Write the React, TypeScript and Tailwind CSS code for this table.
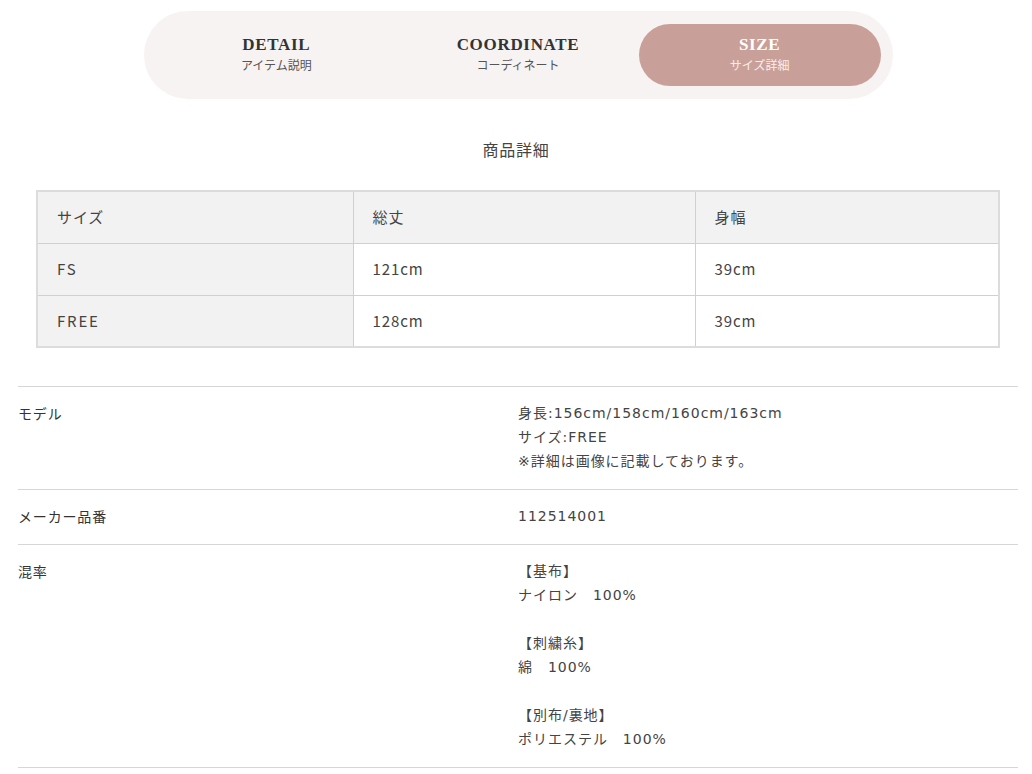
import React from 'react';

const TABS = [
  { id: 'detail', en: 'DETAIL', ja: 'アイテム説明' },
  { id: 'coordinate', en: 'COORDINATE', ja: 'コーディネート' },
  { id: 'size', en: 'SIZE', ja: 'サイズ詳細' },
];

const SIZE_ROWS = [
  ['FS', '121cm', '39cm'],
  ['FREE', '128cm', '39cm'],
];

const SPECS: { label: string; lines: string[] }[] = [
  {
    label: 'モデル',
    lines: ['身長:156cm/158cm/160cm/163cm', 'サイズ:FREE', '※詳細は画像に記載しております。'],
  },
  { label: 'メーカー品番', lines: ['112514001'] },
  {
    label: '混率',
    lines: ['【基布】', 'ナイロン　100%', '', '【刺繍糸】', '綿　100%', '', '【別布/裏地】', 'ポリエステル　100%'],
  },
];

const jp = "font-['Noto_Sans_CJK_JP',sans-serif]";

export default function App() {
  const active = 'size';
  return (
    <div className={`w-[1032px] bg-white text-[#333] ${jp}`}>
      <div className="pt-[11px] flex justify-center">
        <div className="ml-[4px] w-[749px] h-[88px] rounded-full bg-[#f7f3f2] p-[13px_12px] grid grid-cols-3">
          {TABS.map((tab) => (
            <div
              key={tab.id}
              className={`rounded-full flex flex-col items-center justify-center pb-[3px] ${
                tab.id === active ? 'bg-[#c9a099] text-white' : 'text-[#333]'
              }`}
            >
              <span className="font-['Liberation_Serif',serif] font-bold text-[17px] leading-[20px] tracking-[0.04em]">
                {tab.en}
              </span>
              <span
                className={`text-[12px] leading-[16px] mt-[2px] ${
                  tab.id === active ? 'text-[#fbeeee]' : 'text-[#555]'
                }`}
              >
                {tab.ja}
              </span>
            </div>
          ))}
        </div>
      </div>

      <h2 className="mt-[38px] text-center text-[16px] leading-[24px] tracking-[0.05em] text-[#444]">商品詳細</h2>

      <div className="mt-[29px] px-[36px] pr-[32px]">
        <table className="w-full border-collapse border-2 border-[#dcdcdc] text-[15px] tracking-[0.06em] text-[#444]">
          <thead>
            <tr className="bg-[#f2f2f2]">
              <th className="w-[316px] h-[52px] border border-[#d0d0d0] pl-[19px] text-left font-normal">サイズ</th>
              <th className="w-[342px] h-[52px] border border-[#d0d0d0] pl-[19px] text-left font-normal">総丈</th>
              <th className="h-[52px] border border-[#d0d0d0] pl-[19px] text-left font-normal">身幅</th>
            </tr>
          </thead>
          <tbody>
            {SIZE_ROWS.map((row) => (
              <tr key={row[0]}>
                <td className="h-[52px] border border-[#d0d0d0] pl-[19px] bg-[#f2f2f2] tracking-[0.12em]">{row[0]}</td>
                <td className="h-[52px] border border-[#d0d0d0] pl-[19px]">{row[1]}</td>
                <td className="h-[52px] border border-[#d0d0d0] pl-[19px]">{row[2]}</td>
              </tr>
            ))}
          </tbody>
        </table>
      </div>

      <div className="mt-[38px] mx-[18px] mr-[14px] border-t border-[#d6d6d6]">
        {SPECS.map((spec) => (
          <div key={spec.label} className="flex border-b border-[#d6d6d6] pt-[14px] pb-[16px] text-[14px] leading-[24px] tracking-[0.06em] text-[#333]">
            <div className="w-[500px] shrink-0">{spec.label}</div>
            <div className="flex-1 font-['DejaVu_Sans','Noto_Sans_CJK_JP',sans-serif] tracking-[0.07em] text-[#444]">
              {spec.lines.map((line, i) => (
                <div key={i} className="h-[24px] whitespace-pre">
                  {line}
                </div>
              ))}
            </div>
          </div>
        ))}
      </div>
    </div>
  );
}
